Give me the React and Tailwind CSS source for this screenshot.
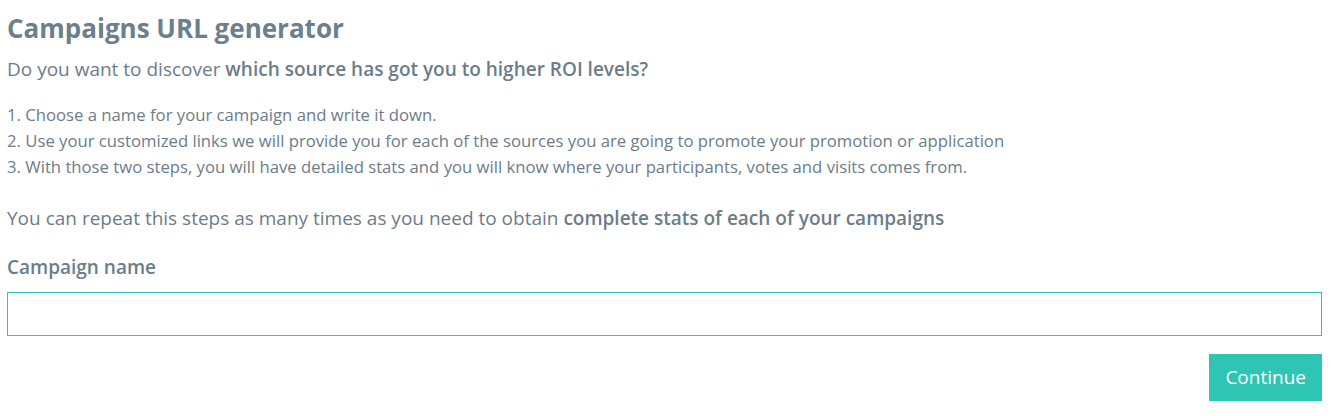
export default function App() {
  return (
    <div className="min-h-screen bg-white pl-[7px] pr-[9px] pt-[10px] text-[#6b7d89] [font-family:'Open_Sans','Noto_Sans',sans-serif]">
      <h1 className="text-[26px] font-bold leading-[36px] text-[#6b7f8c]">Campaigns URL generator</h1>
      <p className="mt-[10px] text-[19px] leading-[26px]">
        Do you want to discover <span className="font-semibold">which source has got you to higher ROI levels?</span>
      </p>

      <ol className="mt-[20px] text-[16.7px] leading-[26px]">
        <li>1. Choose a name for your campaign and write it down.</li>
        <li>2. Use your customized links we will provide you for each of the sources you are going to promote your promotion or application</li>
        <li>3. With those two steps, you will have detailed stats and you will know where your participants, votes and visits comes from.</li>
      </ol>

      <p className="mt-[25px] text-[19px] leading-[26px]">
        You can repeat this steps as many times as you need to obtain <span className="font-semibold">complete stats of each of your campaigns</span>
      </p>

      <label className="mt-[23px] block text-[19px] font-semibold leading-[26px]">Campaign name</label>
      <input type="text" className="mt-[12px] block h-[44px] w-full border border-[#2ec4b6] px-3 text-[16px] outline-none" />

      <div className="mt-[18px] flex justify-end">
        <button className="h-[47px] bg-[#2ec5b5] px-[16px] text-[19px] text-white">Continue</button>
      </div>
    </div>
  );
}
